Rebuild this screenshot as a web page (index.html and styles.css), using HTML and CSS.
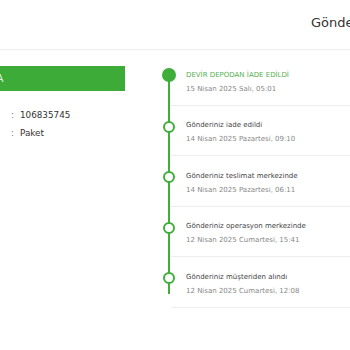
FILE: index.html
```html
<!DOCTYPE html>
<html lang="tr">
  <head>
    <meta charset="UTF-8" />
    <meta name="viewport" content="width=device-width, initial-scale=1.0" />
    <title>Gönderi Takibi</title>
    <link rel="stylesheet" href="styles.css">
  </head>
  <body>
    <header class="topbar">
      <h1 class="page-title">Gönderi Takibi</h1>
    </header>
    <main class="content">
      <section class="summary">
        <div class="status-bar">A</div>
        <div class="details">
          <div class="detail-row"><span class="sep">:</span><span>106835745</span></div>
          <div class="detail-row"><span class="sep">:</span><span>Paket</span></div>
        </div>
      </section>
      <!-- Shipment history -->
      <ol class="timeline">
        <li class="step step-current">
          <div class="rail"><span class="dot"></span></div>
          <div class="step-body">
            <p class="step-title">DEVİR DEPODAN İADE EDİLDİ</p>
            <p class="step-date">15 Nisan 2025 Salı, 05:01</p>
          </div>
        </li>
        <li class="step">
          <div class="rail"><span class="dot"></span></div>
          <div class="step-body">
            <p class="step-title">Gönderiniz iade edildi</p>
            <p class="step-date">14 Nisan 2025 Pazartesi, 09:10</p>
          </div>
        </li>
        <li class="step">
          <div class="rail"><span class="dot"></span></div>
          <div class="step-body">
            <p class="step-title">Gönderiniz teslimat merkezinde</p>
            <p class="step-date">14 Nisan 2025 Pazartesi, 06:11</p>
          </div>
        </li>
        <li class="step">
          <div class="rail"><span class="dot"></span></div>
          <div class="step-body">
            <p class="step-title">Gönderiniz operasyon merkezinde</p>
            <p class="step-date">12 Nisan 2025 Cumartesi, 15:41</p>
          </div>
        </li>
        <li class="step step-last">
          <div class="rail"><span class="dot"></span></div>
          <div class="step-body">
            <p class="step-title">Gönderiniz müşteriden alındı</p>
            <p class="step-date">12 Nisan 2025 Cumartesi, 12:08</p>
          </div>
        </li>
      </ol>
    </main>
  </body>
</html>
```

FILE: styles.css
```css
* {
  box-sizing: border-box;
}
body {
  margin: 0;
  background-color: white;
  color: #333;
  font-family: "DejaVu Sans", sans-serif;
  overflow: hidden;
}
.topbar {
  height: 50px;
  border-bottom: 1px solid #eee;
  overflow: hidden;
}
.page-title {
  margin: 0;
  padding: 15px 0 0 311px;
  font-size: 13px;
  font-weight: normal;
  line-height: 16px;
  white-space: nowrap;
  color: #333;
}
.content {
  display: flex;
}
.summary {
  flex: 0 0 161px;
}
.status-bar {
  width: 125px;
  height: 25px;
  margin-top: 16px;
  background-color: #3cab37;
  color: #dff2dc;
  font-size: 11px;
  line-height: 25px;
  text-indent: -4px;
  overflow: hidden;
}
.details {
  margin-top: 15px;
  padding-left: 11px;
  font-size: 8.8px;
  color: #333;
}
.detail-row {
  display: flex;
  gap: 6px;
  line-height: 18px;
}
.sep {
  color: #777;
}
.timeline {
  flex: 1;
  margin: 0;
  padding: 5px 0 0;
  list-style: none;
}
.step {
  display: flex;
}
.rail {
  position: relative;
  flex: 0 0 10px;
}
.rail::before {
  content: "";
  position: absolute;
  left: 7px;
  top: 0;
  bottom: 0;
  width: 2px;
  background-color: #3fae3a;
}
.step-current .rail::before {
  top: 20px;
}
.step-last .rail::before {
  bottom: auto;
  height: 37px;
}
.dot {
  position: absolute;
  left: 2px;
  top: 15px;
  width: 12px;
  height: 12px;
  border: 2px solid #3fae3a;
  border-radius: 50%;
  background-color: white;
}
.step-current .dot {
  left: 1px;
  top: 13px;
  width: 14px;
  height: 14px;
  background-color: #3fae3a;
}
.step-body {
  flex: 1;
  padding: 12.5px 0 9px 15px;
  border-bottom: 1px solid #eee;
}
.step-body p {
  margin: 0;
  font-size: 7px;
  line-height: 14px;
  white-space: nowrap;
}
.step-title {
  color: #444;
}
.step-current .step-title {
  color: #55b050;
}
.step-date {
  color: #888;
}
```
